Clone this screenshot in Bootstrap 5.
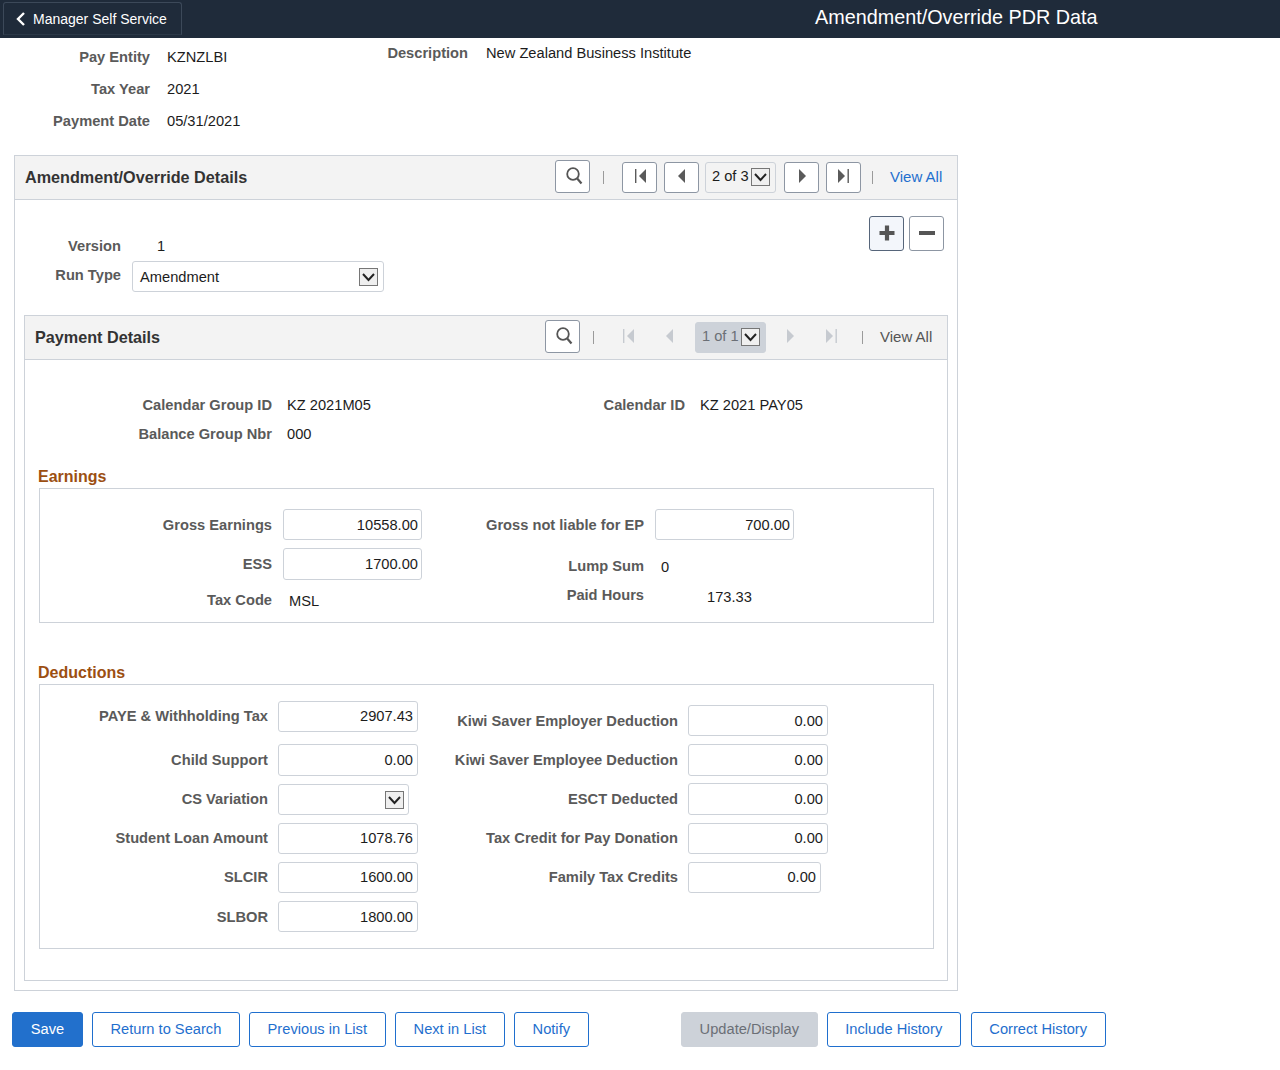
<!DOCTYPE html>
<html lang="en">
<head>
<meta charset="utf-8">
<title>Amendment/Override PDR Data</title>
<link href="https://cdn.jsdelivr.net/npm/bootstrap@5.3.0/dist/css/bootstrap.min.css" rel="stylesheet">
<style>
body{font-family:"Liberation Sans",Arial,sans-serif;font-size:14.67px;color:#1c1c1c;background:#fff;line-height:1.2}
.ps-head{height:38px;background:#1f2b3a;color:#fff;position:relative}
.ps-back{width:179px;height:33px;margin:2px 0 0 3px;border:1px solid #3c4959;border-bottom-color:#2b3847;border-radius:3px 3px 0 0;padding:1px 0 0 12px;font-size:14px;gap:8px;color:#fff}
.ps-title{font-size:19.8px;margin-left:633px;width:284px;white-space:nowrap;padding-bottom:2px}
.lab{font-weight:700;color:#5a5a5a;text-align:right;white-space:nowrap}
.ps-top{height:96px;margin-top:3px;padding-top:1px}
.ps-toprow{height:32px}
.w150{width:150px}.w168{width:168px;margin-left:0}
.desc-col{width:500px;padding-top:3px;margin-left:-7px}
.vgap17{margin-left:17px}.vgap18{margin-left:18px}
.left-col{width:307px}
.ps-panel{border:1px solid #cdd2d9}
.ps-outer{margin:18px 0 0 14px;width:944px;padding-bottom:9px}
.ps-inner{margin:0 9px;padding-bottom:0}
.ps-phead{height:44px;background:#f3f3f3;border-bottom:1px solid #cdd2d9;padding:0 14px 1px 10px}
.ps-phead h2{font-size:16.2px;font-weight:700;color:#333;margin:0;position:relative;top:1px}
.tb{height:31px;width:35px;border:1px solid #8d96a3;border-radius:3px;background:#fff;padding:0;flex:none}
.tb svg{display:block;width:33px;height:29px}
.tb-s{height:33px;margin-bottom:1px}
.tb.tb-s svg{height:31px}
.tb-off{border-color:transparent;background:transparent}
.sep{width:1px;height:13px;background:#9a9a9a;margin-left:13px;margin-right:18px}
.sep2{width:1px;height:13px;background:#9a9a9a;margin-left:11px;margin-right:17px}
.ml7{margin-left:7px}.ml8{margin-left:8px}
.pg{width:71px;height:31px;border:1px solid #cdd2d9;border-radius:3px;padding-left:6px;margin-left:6px;white-space:nowrap}
.pg-off{background:#cdd2d9;border-color:#cdd2d9;color:#6b6f76}
.ar{width:19px;height:18px;border:1px solid #767676;background:#efefef;flex:none;display:block}
.pg .ar{margin-left:2px}
.va{color:#1f6fce;white-space:nowrap;text-decoration:none;width:53px;font-size:15px}
.va-off{color:#555}
.ps-topbody{height:115px;padding:16px 13px 0 0}
.verbox{padding-top:17px}
.vrow{height:27px}
.w106{width:106px}
.ver-val{margin-left:36px}
.runsel{width:252px;height:31px;margin-left:11px;border:1px solid #cdd2d9;border-radius:3px;padding:0 5px 0 7px;margin-top:1px}
.runsel span{padding-top:2px}
.pm{width:35px;height:35px;border:1px solid #8d96a3;border-radius:3px;background:#fff;padding:0;flex:none}
.pm-on{background:#f3f6fb;border-color:#56657a}
.pm svg{display:block;width:33px;height:33px}
.pmgap{gap:5px}
.ps-cal{padding-top:31px}
.calrow{height:29px}
.w247{width:247px}
.calval{margin-left:15px;width:104px;white-space:nowrap}
.w100{width:294px}
.sect{font-size:16px;font-weight:700;color:#9c4f12;height:24px;padding:1px 0 0 13px;line-height:24px}
.sect1{margin-top:15px}
.sect2{margin-top:37px}
.fbox{margin:0 13px 0 14px;border:1px solid #cdd2d9}
.fbox1{height:135px;padding-top:20px}
.fbox2{height:265px;padding-top:16px;margin-bottom:31px}
.w232{width:232px}.w222{width:222px}.w228{width:228px}.w260{width:260px}
.ecol1{width:382px}
.ecol2{width:378px}
.dcol1{width:378px}
.dcol2{width:460px;padding-top:4px}
.fr{height:31px}
.fr32{height:32px}
.g8{margin-bottom:8px}.g12{margin-bottom:12px}.g7{margin-bottom:7px}
.r30{height:30px;padding-top:2px}
.r30.taxc{padding-top:4px}
.inp.form-control{width:139px;height:100%;flex:none;font-size:14.67px;text-align:right;border:1px solid #cdd2d9;border-radius:3px;padding:0 3px 1px;margin-left:11px;color:#1c1c1c;box-shadow:none;line-height:1.2}
.inp.i140{width:140px;margin-left:10px;padding-right:4px}
.inp.i133{width:133px;margin-left:10px;padding-right:4px}
.inp.form-control.nudge{padding-bottom:0;padding-top:1px}
.lab.nudge{padding-top:2px}
.dsel{width:131px;height:31px;margin-left:10px;border:1px solid #cdd2d9;border-radius:3px;padding-right:4px}
.gt17{margin-left:17px}.gt63{margin-left:63px}
.lump{margin-top:4px;padding-top:5px}
.off1{position:relative;top:1px}
.off2{position:relative;top:2px}
.ps-foot{margin:21px 0 0 12px;gap:9px}
.ps-foot .btn{height:35px;font-size:14.67px;padding:0 17.5px;border-radius:3px;line-height:31px;border-color:#1f6fce;color:#1f6fce;background:#fff;white-space:nowrap}
.ps-foot .btn.bsave{background:#2270cc;color:#fff;border-color:#2270cc;width:71px}
.ps-foot .btn.bprev{width:137px}
.ps-foot .btn.bnext{width:110px}
.ps-foot .btn.bnotify{width:75px}
.ps-foot .btn.boff{background:#cdd2d9;color:#6b6f76;border-color:#cdd2d9;margin-left:83px;opacity:1;width:137px}
.ps-foot .btn.bcorr{margin-left:1px;width:135px}
</style>
</head>
<body>
<svg width="0" height="0" class="d-block position-absolute">
<defs>
<symbol id="i-search" viewBox="0 0 33 31"><circle cx="17" cy="13" r="5.800" fill="none" stroke="#555" stroke-width="1.800"/><path d="M21.200 17.500 25.500 22.500" fill="none" stroke="#555" stroke-width="2.200"/></symbol>
<symbol id="i-first" viewBox="0 0 33 29"><rect x="12" y="6" width="1.400" height="14"/><path d="M23 6v14l-7-7z"/></symbol>
<symbol id="i-first-off" viewBox="0 0 33 29"><rect x="10" y="6" width="1.400" height="14"/><path d="M21 6v14l-7-7z"/></symbol>
<symbol id="i-prev" viewBox="0 0 33 29"><path d="M20 6v14l-7-7z"/></symbol>
<symbol id="i-prev-off" viewBox="0 0 33 29"><path d="M18 6v14l-7-7z"/></symbol>
<symbol id="i-next" viewBox="0 0 33 29"><path d="M14 6v14l7-7z"/></symbol>
<symbol id="i-next-off" viewBox="0 0 33 29"><path d="M12 6v14l7-7z"/></symbol>
<symbol id="i-last" viewBox="0 0 33 29"><path d="M11 6v14l7-7z"/><rect x="20.500" y="6" width="1.400" height="14"/></symbol>
<symbol id="i-last-off" viewBox="0 0 33 29"><path d="M9 6v14l7-7z"/><rect x="18.500" y="6" width="1.400" height="14"/></symbol>
<symbol id="i-ar" viewBox="0 0 17 16"><path d="M3 5l5.500 6L14 5" fill="none" stroke="#222" stroke-width="2"/></symbol>
</defs>
</svg>

<header class="ps-head d-flex">
  <div class="ps-back d-flex align-items-center flex-none">
    <svg width="9" height="14" viewBox="0 0 9 14"><path d="M8 1 2 7l6 6" fill="none" stroke="#fff" stroke-width="2.400"/></svg>
    <span>Manager Self Service</span>
  </div>
  <div class="ps-title d-flex align-items-center">Amendment/Override PDR Data</div>
</header>

<section class="ps-top d-flex">
  <div class="left-col">
    <div class="ps-toprow d-flex align-items-center"><div class="lab w150">Pay Entity</div><div class="vgap17">KZNZLBI</div></div>
    <div class="ps-toprow d-flex align-items-center"><div class="lab w150">Tax Year</div><div class="vgap17">2021</div></div>
    <div class="ps-toprow d-flex align-items-center"><div class="lab w150">Payment Date</div><div class="vgap17">05/31/2021</div></div>
  </div>
  <div class="desc-col d-flex">
    <div class="lab w168">Description</div><div class="vgap18">New Zealand Business Institute</div>
  </div>
</section>

<main class="ps-panel ps-outer">
  <div class="ps-phead d-flex align-items-center justify-content-between">
    <h2>Amendment/Override Details</h2>
    <div class="d-flex align-items-center">
      <button class="tb tb-s" aria-label="Search"><svg fill="#555"><use href="#i-search"/></svg></button>
      <span class="sep"></span>
      <button class="tb" aria-label="First"><svg fill="#5a5a5a"><use href="#i-first"/></svg></button>
      <button class="tb ml7" aria-label="Previous"><svg fill="#5a5a5a"><use href="#i-prev"/></svg></button>
      <div class="pg d-flex align-items-center">2 of 3<svg class="ar"><use href="#i-ar"/></svg></div>
      <button class="tb ml8" aria-label="Next"><svg fill="#5a5a5a"><use href="#i-next"/></svg></button>
      <button class="tb ml7" aria-label="Last"><svg fill="#5a5a5a"><use href="#i-last"/></svg></button>
      <span class="sep2"></span>
      <a class="va" href="#">View All</a>
    </div>
  </div>

  <div class="ps-topbody d-flex justify-content-between">
    <div class="verbox">
      <div class="vrow d-flex align-items-center"><div class="lab w106">Version</div><div class="ver-val">1</div></div>
      <div class="d-flex align-items-center"><div class="lab w106">Run Type</div>
        <div class="runsel d-flex align-items-center justify-content-between"><span>Amendment</span><svg class="ar"><use href="#i-ar"/></svg></div>
      </div>
    </div>
    <div class="d-flex pmgap">
      <button class="pm pm-on" aria-label="Add"><svg viewBox="0 0 33 33"><path d="M9.500 16h15M17 8.500v15" stroke="#555" stroke-width="4.200" fill="none"/></svg></button>
      <button class="pm" aria-label="Delete"><svg viewBox="0 0 33 33"><path d="M9 16h16" stroke="#555" stroke-width="4" fill="none"/></svg></button>
    </div>
  </div>

  <div class="ps-panel ps-inner">
    <div class="ps-phead d-flex align-items-center justify-content-between">
      <h2>Payment Details</h2>
      <div class="d-flex align-items-center">
        <button class="tb tb-s" aria-label="Search"><svg fill="#555"><use href="#i-search"/></svg></button>
        <span class="sep"></span>
        <button class="tb tb-off" aria-label="First"><svg fill="#c6cad0"><use href="#i-first-off"/></svg></button>
        <button class="tb tb-off ml7" aria-label="Previous"><svg fill="#c6cad0"><use href="#i-prev-off"/></svg></button>
        <div class="pg pg-off d-flex align-items-center">1 of 1<svg class="ar"><use href="#i-ar"/></svg></div>
        <button class="tb tb-off ml8" aria-label="Next"><svg fill="#c6cad0"><use href="#i-next-off"/></svg></button>
        <button class="tb tb-off ml7" aria-label="Last"><svg fill="#c6cad0"><use href="#i-last-off"/></svg></button>
        <span class="sep2"></span>
        <a class="va va-off" href="#">View All</a>
      </div>
    </div>

    <div class="ps-cal">
      <div class="calrow d-flex align-items-center">
        <div class="lab w247">Calendar Group ID</div><div class="calval">KZ 2021M05</div>
        <div class="lab w100">Calendar ID</div><div class="calval">KZ 2021 PAY05</div>
      </div>
      <div class="calrow d-flex align-items-center">
        <div class="lab w247">Balance Group Nbr</div><div class="calval">000</div>
      </div>
    </div>

    <div class="sect sect1">Earnings</div>
    <div class="fbox fbox1 d-flex">
      <div class="ecol1">
        <div class="fr g8 d-flex align-items-center"><div class="lab w232 nudge">Gross Earnings</div><input class="inp nudge form-control" value="10558.00" aria-label="Gross Earnings"></div>
        <div class="fr32 d-flex align-items-center"><div class="lab w232 nudge">ESS</div><input class="inp form-control" value="1700.00" aria-label="ESS"></div>
        <div class="r30 taxc mt-1 d-flex align-items-center"><div class="lab w232">Tax Code</div><div class="gt17 off1">MSL</div></div>
      </div>
      <div class="ecol2">
        <div class="fr g8 d-flex align-items-center"><div class="lab w222 nudge">Gross not liable for EP</div><input class="inp nudge form-control" value="700.00" aria-label="Gross not liable for EP"></div>
        <div class="fr32 lump d-flex align-items-center"><div class="lab w222">Lump Sum</div><div class="gt17 off1">0</div></div>
        <div class="r30 d-flex align-items-center"><div class="lab w222">Paid Hours</div><div class="gt63 off2">173.33</div></div>
      </div>
    </div>

    <div class="sect sect2">Deductions</div>
    <div class="fbox fbox2 d-flex">
      <div class="dcol1">
        <div class="fr g12 d-flex align-items-center"><div class="lab w228">PAYE &amp; Withholding Tax</div><input class="inp i140 form-control" value="2907.43" aria-label="PAYE and Withholding Tax"></div>
        <div class="fr32 g8 d-flex align-items-center"><div class="lab w228 nudge">Child Support</div><input class="inp i140 form-control" value="0.00" aria-label="Child Support"></div>
        <div class="fr g8 d-flex align-items-center"><div class="lab w228">CS Variation</div><div class="dsel d-flex align-items-center justify-content-end"><svg class="ar"><use href="#i-ar"/></svg></div></div>
        <div class="fr g8 d-flex align-items-center"><div class="lab w228">Student Loan Amount</div><input class="inp i140 form-control" value="1078.76" aria-label="Student Loan Amount"></div>
        <div class="fr g8 d-flex align-items-center"><div class="lab w228">SLCIR</div><input class="inp i140 form-control" value="1600.00" aria-label="SLCIR"></div>
        <div class="fr d-flex align-items-center"><div class="lab w228 nudge">SLBOR</div><input class="inp i140 nudge form-control" value="1800.00" aria-label="SLBOR"></div>
      </div>
      <div class="dcol2">
        <div class="fr g8 d-flex align-items-center"><div class="lab w260 nudge">Kiwi Saver Employer Deduction</div><input class="inp i140 nudge form-control" value="0.00" aria-label="Kiwi Saver Employer Deduction"></div>
        <div class="fr32 g7 d-flex align-items-center"><div class="lab w260 nudge">Kiwi Saver Employee Deduction</div><input class="inp i140 form-control" value="0.00" aria-label="Kiwi Saver Employee Deduction"></div>
        <div class="fr32 g8 d-flex align-items-center"><div class="lab w260 nudge">ESCT Deducted</div><input class="inp i140 form-control" value="0.00" aria-label="ESCT Deducted"></div>
        <div class="fr g8 d-flex align-items-center"><div class="lab w260">Tax Credit for Pay Donation</div><input class="inp i140 form-control" value="0.00" aria-label="Tax Credit for Pay Donation"></div>
        <div class="fr d-flex align-items-center"><div class="lab w260">Family Tax Credits</div><input class="inp i133 form-control" value="0.00" aria-label="Family Tax Credits"></div>
      </div>
    </div>
  </div>
</main>

<footer class="ps-foot d-flex">
  <button class="btn bsave">Save</button>
  <button class="btn">Return to Search</button>
  <button class="btn bprev">Previous in List</button>
  <button class="btn bnext">Next in List</button>
  <button class="btn bnotify">Notify</button>
  <button class="btn boff" disabled>Update/Display</button>
  <button class="btn">Include History</button>
  <button class="btn bcorr">Correct History</button>
</footer>
<script src="https://cdn.jsdelivr.net/npm/bootstrap@5.3.0/dist/js/bootstrap.bundle.min.js"></script>
</body>
</html>
